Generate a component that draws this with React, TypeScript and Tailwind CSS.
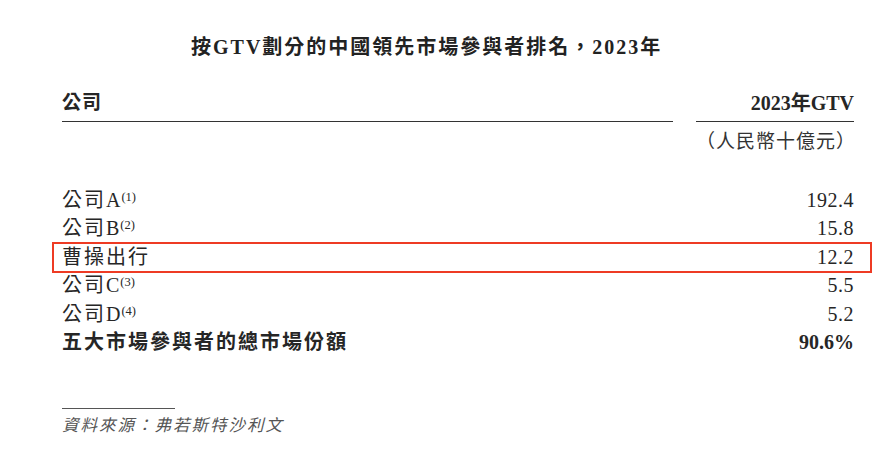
const rows = [
  { name: '公司', latin: 'A', note: '(1)', value: '192.4' },
  { name: '公司', latin: 'B', note: '(2)', value: '15.8' },
  { name: '曹操出行', latin: '', note: '', value: '12.2', highlight: true },
  { name: '公司', latin: 'C', note: '(3)', value: '5.5' },
  { name: '公司', latin: 'D', note: '(4)', value: '5.2' },
]

const font = "font-['Liberation_Serif','Noto_Sans_CJK_TC',serif]"

export default function App() {
  return (
    <div className={`w-[892px] h-[454px] bg-white text-[#262626] ${font} overflow-hidden`}>
      <h1 className="pt-[33px] pl-[191px] text-[20px] leading-[28px] font-bold tracking-[2px] text-[#222]">
        按GTV劃分的中國領先市場參與者排名，2023年
      </h1>

      <div className="ml-[62px] mt-[28px] w-[792px]">
        {/* header */}
        <div className="grid grid-cols-[611px_158px] gap-x-[23px]">
          <div className="border-b-[1.5px] border-[#333] pb-[4px] text-[19px] leading-[28px] font-bold tracking-[1px]">
            公司
          </div>
          <div className="border-b-[1.5px] border-[#333] pb-[4px] text-right text-[20px] leading-[28px] font-bold">
            2023年GTV
          </div>
          <div />
          <div className="pt-[6px] text-right text-[19px] leading-[28px] tracking-[1px] text-[#333]">
            （人民幣十億元）
          </div>
        </div>

        {/* rows */}
        <div className="mt-[30px]">
          {rows.map((r) => (
            <div key={r.value} className="relative flex justify-between h-[28.4px] leading-[28.4px] text-[20px]">
              {r.highlight && (
                <div className="absolute -left-[10px] -right-[18px] -top-[1px] -bottom-[2px] border-2 border-[#ee3b24]" />
              )}
              <span className="tracking-[2px]">
                {r.name}
                {r.latin && <span className="tracking-normal">{r.latin}</span>}
                {r.note && <sup className="text-[12.5px] tracking-normal -top-[6px] relative align-baseline ml-[1px]">{r.note}</sup>}
              </span>
              <span className="tracking-[0.5px]">{r.value}</span>
            </div>
          ))}
          <div className="flex justify-between h-[28.4px] leading-[28.4px] text-[20px] font-bold">
            <span className="tracking-[2px]">五大市場參與者的總市場份額</span>
            <span>90.6%</span>
          </div>
        </div>

        {/* source */}
        <div className="mt-[52px] w-[113px] border-t-[1.5px] border-[#555]" />
        <p className="mt-[5px] text-[16.5px] leading-[24px] italic tracking-[2px] text-[#555]">
          資料來源：弗若斯特沙利文
        </p>
      </div>
    </div>
  )
}
